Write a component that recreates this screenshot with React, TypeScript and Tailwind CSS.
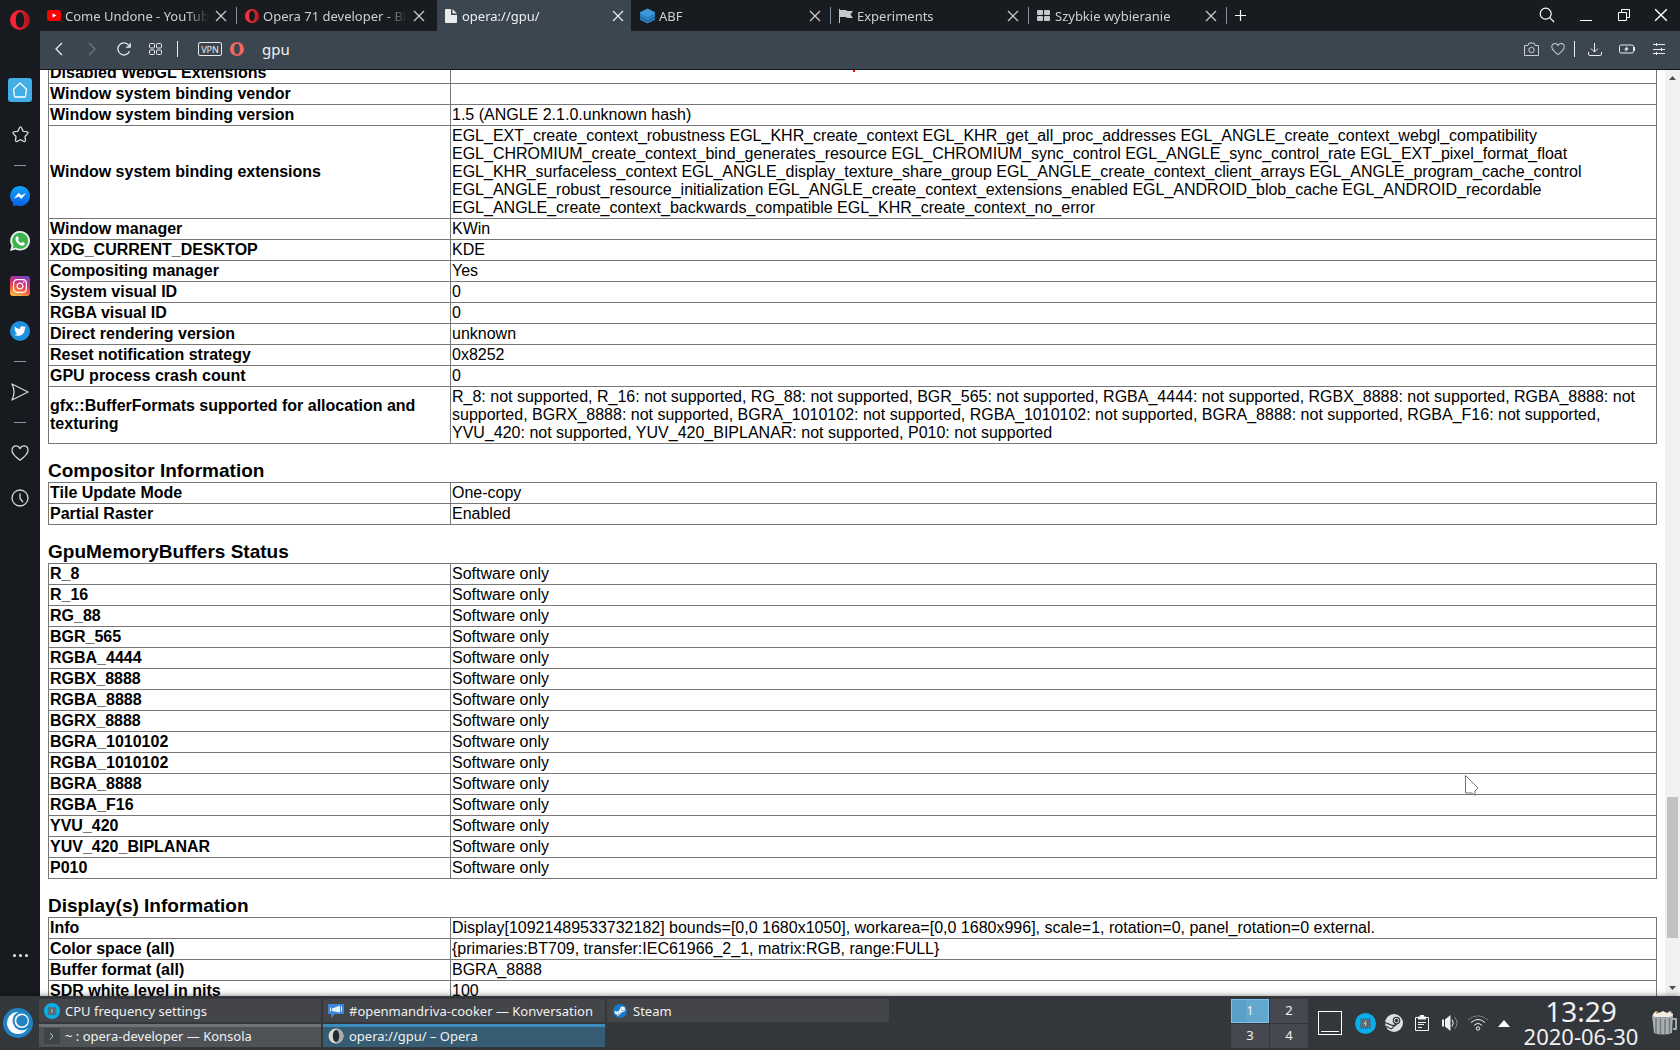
import type { ReactNode } from "react";
import { FaInstagram, FaSteamSymbol, FaTwitter } from "react-icons/fa";

type Row = [string, string];

const driverRows: Row[] = [
  ["Disabled WebGL Extensions", ""],
  ["Window system binding vendor", ""],
  ["Window system binding version", "1.5 (ANGLE 2.1.0.unknown hash)"],
  [
    "Window system binding extensions",
    "EGL_EXT_create_context_robustness EGL_KHR_create_context EGL_KHR_get_all_proc_addresses EGL_ANGLE_create_context_webgl_compatibility EGL_CHROMIUM_create_context_bind_generates_resource EGL_CHROMIUM_sync_control EGL_ANGLE_sync_control_rate EGL_EXT_pixel_format_float EGL_KHR_surfaceless_context EGL_ANGLE_display_texture_share_group EGL_ANGLE_create_context_client_arrays EGL_ANGLE_program_cache_control EGL_ANGLE_robust_resource_initialization EGL_ANGLE_create_context_extensions_enabled EGL_ANDROID_blob_cache EGL_ANDROID_recordable EGL_ANGLE_create_context_backwards_compatible EGL_KHR_create_context_no_error",
  ],
  ["Window manager", "KWin"],
  ["XDG_CURRENT_DESKTOP", "KDE"],
  ["Compositing manager", "Yes"],
  ["System visual ID", "0"],
  ["RGBA visual ID", "0"],
  ["Direct rendering version", "unknown"],
  ["Reset notification strategy", "0x8252"],
  ["GPU process crash count", "0"],
  [
    "gfx::BufferFormats supported for allocation and texturing",
    "R_8: not supported, R_16: not supported, RG_88: not supported, BGR_565: not supported, RGBA_4444: not supported, RGBX_8888: not supported, RGBA_8888: not supported, BGRX_8888: not supported, BGRA_1010102: not supported, RGBA_1010102: not supported, BGRA_8888: not supported, RGBA_F16: not supported, YVU_420: not supported, YUV_420_BIPLANAR: not supported, P010: not supported",
  ],
];

const compositorRows: Row[] = [
  ["Tile Update Mode", "One-copy"],
  ["Partial Raster", "Enabled"],
];

const bufferRows: Row[] = [
  "R_8",
  "R_16",
  "RG_88",
  "BGR_565",
  "RGBA_4444",
  "RGBX_8888",
  "RGBA_8888",
  "BGRX_8888",
  "BGRA_1010102",
  "RGBA_1010102",
  "BGRA_8888",
  "RGBA_F16",
  "YVU_420",
  "YUV_420_BIPLANAR",
  "P010",
].map((name) => [name, "Software only"]);

const displayRows: Row[] = [
  [
    "Info",
    "Display[10921489533732182] bounds=[0,0 1680x1050], workarea=[0,0 1680x996], scale=1, rotation=0, panel_rotation=0 external.",
  ],
  ["Color space (all)", "{primaries:BT709, transfer:IEC61966_2_1, matrix:RGB, range:FULL}"],
  ["Buffer format (all)", "BGRA_8888"],
  ["SDR white level in nits", "100"],
];

function InfoTable({ rows }: { rows: Row[] }) {
  return (
    <table className="w-full table-fixed border-collapse text-left text-[16px] leading-[18px]">
      <tbody>
        {rows.map(([name, value]) => (
          <tr key={name}>
            <th scope="row" className="h-[21px] w-1/4 border border-[#777777] p-px align-middle font-bold">
              {name}
            </th>
            <td className="border border-[#777777] p-px align-middle">{value}</td>
          </tr>
        ))}
      </tbody>
    </table>
  );
}

function Section({ title, rows }: { title: string; rows: Row[] }) {
  return (
    <section>
      <h3 className="pt-4 text-[19px] leading-[22px] font-bold">{title}</h3>
      <InfoTable rows={rows} />
    </section>
  );
}

function OperaLogo({ className, from, to }: { className: string; from: string; to: string }) {
  const id = `opera-${from.slice(1)}`;
  return (
    <svg viewBox="0 0 20 20" className={className} aria-hidden="true">
      <defs>
        <linearGradient id={id} x1="0" x2="1" y1="0" y2="0">
          <stop offset="0.3" stopColor={from} />
          <stop offset="1" stopColor={to} />
        </linearGradient>
      </defs>
      <path
        fillRule="evenodd"
        fill={`url(#${id})`}
        d="M10 0a10 10 0 1 0 0 20a10 10 0 1 0 0-20ZM10 2.3c2.6 0 4.2 3.3 4.2 7.7s-1.6 7.7-4.2 7.7S5.8 14.400 5.800 10S7.400 2.300 10 2.300Z"
      />
    </svg>
  );
}

function Cross({ className }: { className: string }) {
  return (
    <svg viewBox="0 0 12 12" className={className} fill="none" stroke="currentColor" strokeWidth="1.2" aria-hidden="true">
      <path d="M1 1l10 10M11 1L1 11" />
    </svg>
  );
}

function Heart({ className }: { className: string }) {
  return (
    <svg viewBox="0 0 18 18" className={className} fill="none" stroke="currentColor" strokeWidth="1.3" aria-hidden="true">
      <path d="M9 16.200C6 14 1 10.200 1 6.200C1 3.500 2.900 1.900 5 1.900c1.700 0 3.200 1 4 2.700c.8-1.700 2.300-2.700 4-2.700c2.100 0 4 1.600 4 4.300c0 4-5 7.800-8 10Z" strokeLinejoin="round" />
    </svg>
  );
}

function CpuBadge({ className }: { className: string }) {
  return (
    <svg viewBox="0 0 20 20" className={className} aria-hidden="true">
      <circle cx="10" cy="10" r="10" fill="#0aaeea" />
      <rect x="5.500" y="5.500" width="9" height="9" fill="none" stroke="#4d5a60" strokeDasharray="1 1" strokeWidth="1.500" />
      <rect x="6" y="6" width="8" height="8" fill="#60686c" />
      <path d="M10.500 7.500L9 10h1.500L9.500 12.500" stroke="#d8d8d8" fill="none" strokeWidth="0.900" />
    </svg>
  );
}

const tabs: { title: string; icon: ReactNode; active?: boolean; divider?: boolean }[] = [
  {
    title: "Come Undone - YouTube",
    divider: true,
    icon: (
      <svg viewBox="0 0 14 11" className="w-[14px]">
        <rect width="14" height="11" rx="2.500" fill="#ff0000" />
        <path d="M5.500 3.200v4.600L9.500 5.500z" fill="#fff" />
      </svg>
    ),
  },
  { title: "Opera 71 developer - Blog", icon: <OperaLogo className="w-[14px]" from="#f8303c" to="#b81520" /> },
  {
    title: "opera://gpu/",
    active: true,
    icon: (
      <svg viewBox="0 0 12 14" className="h-[14px]" fill="#e8eaec">
        <path d="M1 0h5v6h6v7a1 1 0 0 1-1 1H1a1 1 0 0 1-1-1V1a1 1 0 0 1 1-1ZM7.500 0L12 4.600H7.500Z" />
      </svg>
    ),
  },
  {
    title: "ABF",
    divider: true,
    icon: (
      <svg viewBox="0 0 16 16" className="h-4">
        <path d="M8 6.500L16 10.500V12L8 16L0 12V10.500z" fill="#2e86c8" />
        <path d="M0 8.500L8 12.500L16 8.500V10L8 14L0 10z" fill="#1b5f9c" />
        <path d="M0 5L8 9L16 5V8.500L8 12.500L0 8.500z" fill="#2f8ace" />
        <path d="M0 5.500L8 9.500L16 5.500V6.500L8 10.500L0 6.500z" fill="#1b5f9c" />
        <path d="M8 0L16 4V5.500L8 9.500L0 5.500V4z" fill="#3c97da" />
      </svg>
    ),
  },
  {
    title: "Experiments",
    divider: true,
    icon: (
      <svg viewBox="0 0 14 14" className="w-[14px]" fill="#c4c6c8">
        <path d="M0 0h1v14H0zM1 1h6l1 1h6l-2.500 3.500L14 9H8L7 8H1z" />
      </svg>
    ),
  },
  {
    title: "Szybkie wybieranie",
    divider: true,
    icon: (
      <svg viewBox="0 0 13 11" className="w-[13px]" fill="#c4c6c8">
        <rect width="6" height="5" rx="1" />
        <rect x="7" width="6" height="5" rx="1" />
        <rect y="6" width="6" height="5" rx="1" />
        <rect x="7" y="6" width="6" height="5" rx="1" />
      </svg>
    ),
  },
];

function SideItem({ label, children }: { label: string; children: ReactNode }) {
  return (
    <button aria-label={label} className="flex h-[45px] w-full items-center justify-center text-[#d4d7da]">
      {children}
    </button>
  );
}

function SideRule() {
  return (
    <div className="flex h-4 items-center justify-center">
      <span className="h-px w-3 bg-[#8795a0]" />
    </div>
  );
}

function Sidebar() {
  return (
    <aside className="flex w-10 shrink-0 flex-col bg-[#171b1f] pt-[10px] pb-8">
      <button aria-label="Opera menu" className="mb-[37px] flex justify-center">
        <OperaLogo className="h-5 w-5" from="#fa2236" to="#a3121e" />
      </button>
      <nav aria-label="Sidebar">
        <SideItem label="Speed Dial">
          <span className="flex h-6 w-6 items-center justify-center rounded-[3px] bg-[#42aee6] text-white">
            <svg viewBox="0 0 16 16" className="h-4 w-4" fill="none" stroke="currentColor" strokeWidth="1.300" strokeLinejoin="round">
              <path d="M8 1L14.500 7.200L13.600 14Q13.500 15 12.500 15H3.500Q2.500 15 2.400 14L1.500 7.200Z" />
            </svg>
          </span>
        </SideItem>
        <SideItem label="Bookmarks">
          <svg viewBox="0 0 18 18" className="h-[17px] w-[17px]" fill="none" stroke="currentColor" strokeWidth="1.400" strokeLinejoin="round">
            <path d="M9 1c1 0 1.300.8 2.300 3.700q.3.900 1.200 1c3.500.2 4.300.4 4.500 1.200c.2 1-.5 1.400-2.800 3.600q-.6.600-.4 1.400c.9 3.300.8 4-.1 4.500c-.8.500-1.500-.1-3.900-1.600q-.8-.5-1.600 0c-2.400 1.500-3.100 2.100-3.900 1.600c-.9-.5-1-1.200-.1-4.500q.2-.8-.4-1.400C1.500 8.300.8 7.900 1 6.900c.2-.8 1-1 4.500-1.200q.9-.1 1.200-1C7.700 1.800 8 1 9 1Z" />
          </svg>
        </SideItem>
        <SideRule />
        <SideItem label="Messenger">
          <svg viewBox="0 0 20 20" className="h-5 w-5">
            <defs>
              <linearGradient id="messenger" x1="0" x2="0" y1="0" y2="1">
                <stop stopColor="#12a4f8" />
                <stop offset="1" stopColor="#0a5eea" />
              </linearGradient>
            </defs>
            <path d="M10 0a10 10 0 1 1-3.400 19.400L3 20v-3A10 10 0 0 1 10 0Z" fill="url(#messenger)" />
            <path d="M3.800 12.700L8.600 6.700l2.800 2.600L16.200 7l-4.800 6l-2.700-2.600z" fill="#fff" />
          </svg>
        </SideItem>
        <SideItem label="WhatsApp">
          <svg viewBox="0 0 20 20" className="h-5 w-5">
            <path d="M10.200 0a9.800 9.800 0 1 1-4.700 18.400L0 20l1.500-5.300A9.800 9.800 0 0 1 10.200 0Z" fill="#e9edea" />
            <path d="M10.200 1.800a8 8 0 1 1-4.300 14.800L2.700 17.400l.9-3.100A8 8 0 0 1 10.200 1.800Z" fill="#3bb34a" />
            <path d="M7 5.300c.4-.2.900-.1 1.100.4l.7 1.700c.1.300 0 .6-.8 1.500c.8 1.500 1.900 2.500 3.400 3.100c.9-1.100 1-1.200 1.400-1l1.800.9c.5.200.2 1.700-.4 2.200c-1.300 1-3.300.6-5.300-.7C6.900 12 5.600 10 5.500 8.300C5.400 7 6.200 5.700 7 5.300Z" fill="#fff" />
          </svg>
        </SideItem>
        <SideItem label="Instagram">
          <span className="flex h-5 w-5 items-center justify-center rounded-[3px] bg-[linear-gradient(20deg,#fdc048_5%,#f3613b_35%,#d12c7c_60%,#6f45c8_95%)] text-white">
            <FaInstagram className="h-4 w-4" />
          </span>
        </SideItem>
        <SideItem label="Twitter">
          <span className="flex h-5 w-5 items-center justify-center rounded-full bg-[#1e8fdf] text-white">
            <FaTwitter className="h-3 w-3" />
          </span>
        </SideItem>
        <SideRule />
        <SideItem label="My Flow">
          <svg viewBox="0 0 18 18" className="h-[18px] w-[18px]" fill="none" stroke="currentColor" strokeWidth="1.300" strokeLinejoin="round">
            <path d="M1 1L17 9L1 17Q5 9 1 1Z" />
          </svg>
        </SideItem>
        <SideRule />
        <SideItem label="Personal news">
          <Heart className="h-[18px] w-[18px]" />
        </SideItem>
        <SideItem label="History">
          <svg viewBox="0 0 18 18" className="h-[18px] w-[18px]" fill="none" stroke="currentColor" strokeWidth="1.300">
            <circle cx="9" cy="9" r="8" />
            <path d="M9 4.500V9.500L12 13" />
          </svg>
        </SideItem>
      </nav>
      <button aria-label="Sidebar setup" className="mt-auto flex h-[18px] items-center justify-center gap-[3px]">
        <span className="h-[3px] w-[3px] rounded-full bg-[#e6e8ea]" />
        <span className="h-[3px] w-[3px] rounded-full bg-[#e6e8ea]" />
        <span className="h-[3px] w-[3px] rounded-full bg-[#e6e8ea]" />
      </button>
    </aside>
  );
}

function TabBar() {
  return (
    <header className="flex h-[31px] justify-between bg-[#181c20] text-[13px] text-[#cdd0d2]">
      <div className="flex">
        <div className="grid w-[1188px] grid-cols-6">
          {tabs.map((tab) => (
            <div
              key={tab.title}
              className={
                tab.active
                  ? "mr-[3px] ml-px flex min-w-0 items-center bg-[#3b4651] pr-[7px] pl-[6px] text-[#eceeef]"
                  : "flex min-w-0 items-center pr-px pl-[6px]"
              }
            >
              <button className="flex min-w-0 flex-1 items-center gap-1 text-left">
                <span className="flex w-[15px] shrink-0 justify-center">{tab.icon}</span>
                <span className="mr-[6px] min-w-0 flex-1 overflow-hidden [mask-image:linear-gradient(to_right,black_calc(100%-22px),transparent)] leading-5 whitespace-nowrap">
                  {tab.title}
                </span>
              </button>
              <button aria-label={`Close ${tab.title}`}>
                <Cross className="h-3 w-3" />
              </button>
              {!tab.active && (
                <span className={tab.divider ? "ml-[9px] h-[17px] w-px bg-[#8292a0]" : "ml-[9px] w-px"} />
              )}
            </div>
          ))}
        </div>
        <button aria-label="New tab" className="ml-[6px] pb-px">
          <svg viewBox="0 0 13 13" className="h-[13px] w-[13px]" stroke="#fff" strokeWidth="1.200">
            <path d="M6.500 1v11M1 6.500h11" />
          </svg>
        </button>
      </div>
      <div className="flex items-center pr-3 pb-[2px] text-white">
        <button aria-label="Search in tabs">
          <svg viewBox="0 0 16 16" className="h-4 w-4" fill="none" stroke="currentColor" strokeWidth="1.200">
            <circle cx="6.700" cy="6.700" r="5.500" />
            <path d="M10.700 10.700L15 15" />
          </svg>
        </button>
        <button aria-label="Minimize" className="ml-[25px] flex h-3 w-3 items-end">
          <span className="h-px w-3 bg-white" />
        </button>
        <button aria-label="Restore" className="ml-[26px]">
          <svg viewBox="0 0 12 12" className="h-3 w-3" fill="none" stroke="currentColor">
            <path d="M.5 3.500h8v8h-8zM3.500 3.500v-3h8v8h-3" />
          </svg>
        </button>
        <button aria-label="Close window" className="ml-6">
          <Cross className="h-[14px] w-[14px]" />
        </button>
      </div>
    </header>
  );
}

function Toolbar() {
  return (
    <div className="flex h-[39px] items-center border-b border-[#15181b] bg-[#3b4651] pr-[15px] pb-[2px] pl-[14px] text-[#e8eaec]">
      <button aria-label="Back">
        <svg viewBox="0 0 9 14" className="h-[14px] w-[9px]" fill="none" stroke="currentColor" strokeWidth="1.300">
          <path d="M8 1L2 7l6 6" />
        </svg>
      </button>
      <button aria-label="Forward" className="ml-[25px] text-[#6f7982]" disabled>
        <svg viewBox="0 0 9 14" className="h-[14px] w-[9px]" fill="none" stroke="currentColor" strokeWidth="1.300">
          <path d="M1 1l6 6l-6 6" />
        </svg>
      </button>
      <button aria-label="Reload" className="ml-5">
        <svg viewBox="0 0 14 14" className="h-[14px] w-[14px]" fill="none" stroke="currentColor" strokeWidth="1.300">
          <path d="M12.500 9.200A6 6 0 1 1 11.700 3.300L12.800 4.700M13.200 1v4.200H9" />
        </svg>
      </button>
      <button aria-label="Speed Dial page" className="ml-[18px]">
        <svg viewBox="0 0 13 12" className="h-3 w-[13px]" fill="none" stroke="currentColor">
          <rect x=".5" y=".5" width="5" height="4.500" rx="1" />
          <rect x="7.500" y=".5" width="5" height="4.500" rx="1" />
          <rect x=".5" y="7" width="5" height="4.500" rx="1" />
          <rect x="7.500" y="7" width="5" height="4.500" rx="1" />
        </svg>
      </button>
      <span className="ml-[15px] h-4 w-px bg-[#e8eaec]" />
      <button className="ml-5 flex h-[14px] w-6 items-center justify-center rounded-[2px] border border-[#e8eaec] text-[9px] leading-none">
        VPN
      </button>
      <OperaLogo className="ml-2 h-[14px] w-[14px]" from="#f5675f" to="#f5675e" />
      <input
        aria-label="Address"
        defaultValue="gpu"
        className="ml-[18px] h-6 min-w-0 flex-1 bg-transparent text-[15px] text-[#f0f2f3] outline-none"
      />
      <button aria-label="Snapshot">
        <svg viewBox="0 0 15 14" className="h-[14px] w-[15px]" fill="none" stroke="#c9ced2">
          <path d="M.5 3.500h3.500l1-2.500h5l1 2.500h3.500v10H.5z" strokeLinejoin="round" />
          <circle cx="7.500" cy="8" r="2.700" />
        </svg>
      </button>
      <button aria-label="Add to bookmarks" className="ml-3 text-[#c9ced2]">
        <Heart className="h-[14px] w-[14px]" />
      </button>
      <span className="ml-[9px] h-4 w-px bg-[#e8eaec]" />
      <button aria-label="Downloads" className="ml-[13px]">
        <svg viewBox="0 0 14 14" className="h-[14px] w-[14px]" fill="none" stroke="currentColor">
          <path d="M6.500 1v9M3 6.500L6.500 10L10 6.500M.5 10v2q0 1.500 1.500 1.500h10q1.500 0 1.500-1.500v-2" />
        </svg>
      </button>
      <button aria-label="Battery saver" className="ml-[17px]">
        <svg viewBox="0 0 16 10" className="h-[10px] w-4" fill="none" stroke="currentColor">
          <rect x=".5" y="1" width="14" height="8" rx="1.500" />
          <path d="M15.500 3v4" />
          <path d="M8.500 2L5 5.400h2L6 8l4-3.500H8z" fill="currentColor" stroke="none" />
        </svg>
      </button>
      <button aria-label="Easy setup" className="ml-[18px]">
        <svg viewBox="0 0 12 12" className="h-3 w-3" fill="none" stroke="currentColor">
          <path d="M0 1.500h12M0 6.500h12M0 10.500h12M3.500 0v3M8.500 5v3M3.500 9v3" />
        </svg>
      </button>
    </div>
  );
}

function Scrollbar() {
  return (
    <div aria-hidden="true" className="flex w-[15px] shrink-0 flex-col items-center bg-[#f1f1f1]">
      <svg viewBox="0 0 15 15" className="h-[15px] w-[15px] shrink-0" fill="#505050">
        <path d="M4 10h7L7.500 6z" />
      </svg>
      <span className="flex-[712]" />
      <span className="h-[141px] w-[11px] bg-[#c1c1c1]" />
      <span className="flex-[43]" />
      <svg viewBox="0 0 15 15" className="h-[15px] w-[15px] shrink-0" fill="#505050">
        <path d="M4 5h7L7.500 9z" />
      </svg>
    </div>
  );
}

const tasks: { title: string; style: string; icon: ReactNode }[] = [
  {
    title: "CPU frequency settings",
    style: "border-[#444549] bg-[#444549]",
    icon: <CpuBadge className="h-4 w-4" />,
  },
  {
    title: "~ : opera-developer — Konsola",
    style: "border-[#717476] bg-[#505356]",
    icon: (
      <svg viewBox="0 0 16 16" className="h-4 w-4">
        <rect width="16" height="16" fill="#3c4648" />
        <path d="M6 5l3 3l-3 3.500" fill="none" stroke="#c5cccd" />
      </svg>
    ),
  },
  {
    title: "#openmandriva-cooker — Konversation",
    style: "border-[#444549] bg-[#444549]",
    icon: (
      <svg viewBox="0 0 16 16" className="h-4 w-4">
        <path d="M0 1h16v10H7l-4 4v-4H0z" fill="#3d86d8" />
        <path d="M4 5.500L12 2.500v7L4 8zM2 4.500h1v4H2zM13 3.500h1v5h-1z" fill="#e4f1ff" />
      </svg>
    ),
  },
  {
    title: "opera://gpu/ – Opera",
    style: "border-[#3b8dbd] bg-[#365d74]",
    icon: (
      <svg viewBox="0 0 16 16" className="h-4 w-4">
        <circle cx="8" cy="8" r="7.500" fill="#d9d9d9" />
        <path d="M8 .5a7.500 7.500 0 0 1 0 15z" fill="#a9acae" />
        <ellipse cx="8" cy="8" rx="3.200" ry="6" fill="#23282c" />
      </svg>
    ),
  },
  {
    title: "Steam",
    style: "border-[#444549] bg-[#444549]",
    icon: (
      <span className="flex h-[14px] w-[14px] items-center justify-center rounded-full bg-[#1a78c8] text-white">
        <FaSteamSymbol className="h-3 w-3" />
      </span>
    ),
  },
];

function Taskbar() {
  return (
    <footer className="relative flex h-[54px] shrink-0 items-center bg-[#33363b] pr-[3px] pl-[3px] text-[#eff0f1] shadow-[0_0_6px_rgba(0,0,0,0.5)]">
      <button aria-label="Application launcher">
        <svg viewBox="0 0 30 30" className="h-[30px] w-[30px]">
          <circle cx="15" cy="15" r="15" fill="#2183c1" />
          <circle cx="15" cy="15" r="11" fill="#fff" />
          <circle cx="19" cy="12.800" r="9.500" fill="#2183c1" />
          <circle cx="18.700" cy="12.800" r="7.200" fill="#fff" />
          <circle cx="19" cy="12.800" r="5.700" fill="#2183c1" />
        </svg>
      </button>
      <div className="ml-[6px] grid w-[850px] grid-flow-col grid-cols-3 grid-rows-2 gap-[2px] text-[13px]">
        {tasks.map((task) => (
          <button key={task.title} className={`${task.style} flex h-[23px] items-center gap-[5px] border-t-[3px] pb-[3px] pl-[5px]`}>
            <span className="flex w-4 justify-center">{task.icon}</span>
            <span className="leading-[18px] whitespace-nowrap">{task.title}</span>
          </button>
        ))}
      </div>
      <div className="ml-auto grid w-[77px] grid-cols-2 gap-px text-[13px]">
        {[1, 2, 3, 4].map((n) => (
          <button
            key={n}
            className={
              n === 1
                ? "h-6 border border-[#7fc3ea] bg-[linear-gradient(90deg,#5a9fc8_38%,#64a7cd_38%)]"
                : "h-6 bg-[#45484f]"
            }
          >
            {n}
          </button>
        ))}
      </div>
      <button aria-label="Show desktop" className="ml-[10px] flex h-6 w-6 items-end justify-center border border-white pb-[2px]">
        <span className="h-px w-[18px] bg-white" />
      </button>
      <CpuBadge className="ml-[13px] h-[21px] w-[21px]" />
      <svg viewBox="0 0 18 18" className="ml-[9px] h-[18px] w-[18px]">
        <circle cx="9" cy="9" r="9" fill="#dfe0e1" />
        <circle cx="11.500" cy="6.500" r="3.800" fill="#33363b" />
        <circle cx="11.500" cy="6.500" r="2.200" fill="none" stroke="#dfe0e1" />
        <path d="M0 8.500L7.800 11.500L12 10.300L8.500 12.500A2.600 2.600 0 0 1 3.800 13.500L.8 12.300" fill="none" stroke="#33363b" strokeWidth="1.200" />
      </svg>
      <svg viewBox="0 0 14 16" className="ml-3 h-4 w-[14px]" fill="none" stroke="#eff0f1">
        <path d="M.5 2.500h13v13H.5z" />
        <path d="M3 1.500h2V0h4v1.500h2v3H3z" fill="#eff0f1" stroke="none" />
        <path d="M3 7.500h8M3 9.500h6M3 12.500h4" />
      </svg>
      <svg viewBox="0 0 16 16" className="ml-[13px] h-4 w-4" fill="#eff0f1">
        <path d="M0 4.500h2v7H0zM3 4.500L8.500 0v16L3 11.500z" />
        <path d="M10 4.500Q12.500 8 10 11.500" fill="none" stroke="#eff0f1" />
        <path d="M12.500 2Q17.500 8 12.500 14" fill="none" stroke="#85888b" />
      </svg>
      <svg viewBox="0 0 20 16" className="ml-[10px] h-4 w-5" fill="none" stroke="#eff0f1">
        <path d="M0 5Q10-3.500 20 5" stroke="#777a7e" />
        <path d="M3 7.500Q10 1.500 17 7.500" />
        <path d="M6 10.500Q10 6.500 14 10.500" />
        <circle cx="10" cy="13.500" r="1.700" />
      </svg>
      <svg viewBox="0 0 12 7" className="ml-[10px] h-[7px] w-3" fill="#fff">
        <path d="M0 7L6 0l6 7z" />
      </svg>
      <time dateTime="2020-06-30T13:29" className="ml-[13px] flex w-[116px] flex-col items-center">
        <span className="text-[28px] leading-[26px]">13:29</span>
        <span className="text-[22px] leading-6">2020-06-30</span>
      </time>
      <svg viewBox="0 0 26 26" className="ml-3 h-[26px] w-[26px]" aria-label="Trash">
        <path d="M2 4l3-3l3 2l4-2l4 2l3-2l3 3v3H2z" fill="#f1ece4" />
        <path d="M5 1l3 2l-3 1zM15 1l4 2l1-2l1 3z" fill="#c89a58" />
        <path d="M21 9h4v10h-3" fill="none" stroke="#a4abae" strokeWidth="2" />
        <path d="M1 5q3 3 10 2q8 1 11-2l-1 18q-9 3-18 0z" fill="#a8b0b3" />
        <path d="M5 8v15M9.500 9v15M14 9v15M18.500 8v15" stroke="#6f787c" strokeWidth="1.500" />
      </svg>
    </footer>
  );
}

export default function App() {
  return (
    <div className="flex h-screen flex-col overflow-hidden bg-white font-['Noto_Sans',sans-serif]">
      <div className="flex min-h-0 flex-1">
        <Sidebar />
        <div className="flex min-w-0 flex-1 flex-col">
          <TabBar />
          <Toolbar />
          <div className="relative flex min-h-0 flex-1">
            <main className="min-w-0 flex-1 overflow-hidden bg-white px-2 font-['Liberation_Sans',Arial,sans-serif] text-black">
              <div className="-mt-2">
                <InfoTable rows={driverRows} />
                <Section title="Compositor Information" rows={compositorRows} />
                <Section title="GpuMemoryBuffers Status" rows={bufferRows} />
                <Section title="Display(s) Information" rows={displayRows} />
              </div>
            </main>
            <Scrollbar />
            <span className="absolute top-0 left-[813px] h-[2px] w-[2px] bg-[#f00]" />
            <svg viewBox="0 0 14 22" className="absolute top-[705px] left-[1425px] h-[22px] w-[14px]" fill="#fff" stroke="#6d7576">
              <path d="M.5.5L13 13l-3 3v4.500l-2.500-2.500H.5z" />
            </svg>
          </div>
        </div>
      </div>
      <Taskbar />
    </div>
  );
}
